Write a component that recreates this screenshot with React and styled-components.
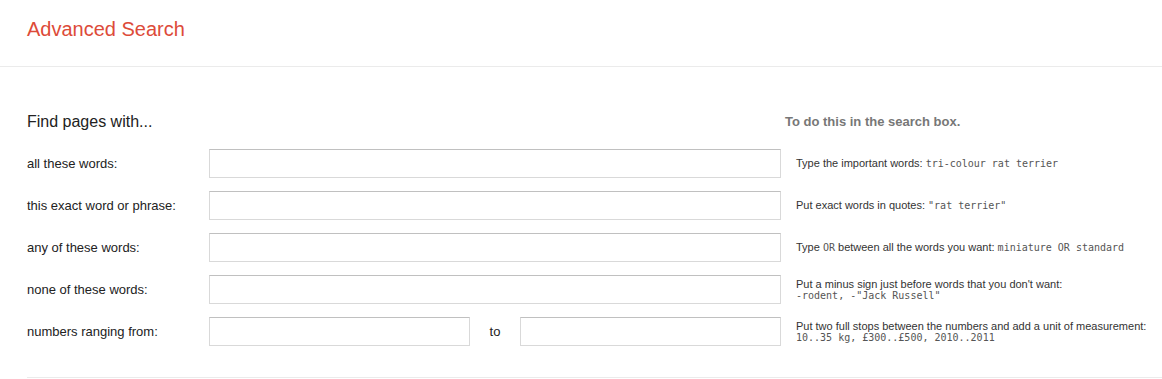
import React from 'react';
import styled, { createGlobalStyle } from 'styled-components';

const GlobalStyle = createGlobalStyle`
  html, body {
    margin: 0;
    padding: 0;
    background: #fff;
    font-family: "Liberation Sans", Arial, sans-serif;
  }
`;

const Page = styled.div`
  width: 1162px;
  height: 379px;
  overflow: hidden;
  background: #fff;
`;

const Header = styled.header`
  height: 67px;
  box-sizing: border-box;
  padding: 19px 0 0 27px;
  border-bottom: 1px solid #ebebeb;
`;

const Title = styled.h1`
  margin: 0;
  font-size: 20px;
  line-height: 20px;
  font-weight: normal;
  color: #dd4b39;
`;

const Main = styled.main`
  padding: 47px 0 0 27px;
`;

const Form = styled.div`
  display: grid;
  grid-template-columns: 182px 572px 1fr;
  row-gap: 13px;
  padding-bottom: 31px;
  border-bottom: 1px solid #ebebeb;
`;

const SectionTitle = styled.h3`
  grid-column: 1 / 3;
  margin: 0 0 6px;
  font-size: 16px;
  line-height: 16px;
  font-weight: normal;
  color: #222;
`;

const HintTitle = styled.h3`
  margin: 0 0 6px;
  padding-left: 4px;
  font-size: 13px;
  line-height: 16px;
  font-weight: bold;
  color: #777;
`;

const Label = styled.label`
  display: flex;
  align-items: center;
  height: 29px;
  font-size: 13px;
  color: #222;
`;

const Field = styled.div`
  display: flex;
  align-items: center;
  height: 29px;
`;

const Input = styled.input`
  box-sizing: border-box;
  height: 29px;
  width: ${p => (p.$half ? '261px' : '100%')};
  margin: 0;
  padding: 0 8px;
  border: 1px solid #d9d9d9;
  border-top-color: #c0c0c0;
  border-radius: 0;
  background: #fff;
  font-size: 13px;
  outline: none;
`;

const To = styled.span`
  flex: 1;
  text-align: center;
  font-size: 13px;
  color: #222;
`;

const Hint = styled.div`
  display: flex;
  flex-direction: column;
  justify-content: center;
  height: 29px;
  padding-left: 15px;
  font-size: 11px;
  line-height: 12px;
  color: #333;
`;

const Code = styled.span`
  font-family: "DejaVu Sans Mono", "Liberation Mono", monospace;
  font-size: 10px;
  color: #555;
`;

const rows = [
  {
    label: 'all these words:',
    hint: <span>Type the important words: <Code>tri-colour rat terrier</Code></span>,
  },
  {
    label: 'this exact word or phrase:',
    hint: <span>Put exact words in quotes: <Code>"rat terrier"</Code></span>,
  },
  {
    label: 'any of these words:',
    hint: (
      <span>
        Type <Code>OR</Code> between all the words you want: <Code>miniature OR standard</Code>
      </span>
    ),
  },
  {
    label: 'none of these words:',
    hint: (
      <>
        <span>Put a minus sign just before words that you don't want:</span>
        <Code>-rodent, -"Jack Russell"</Code>
      </>
    ),
  },
];

export default function App() {
  return (
    <Page>
      <GlobalStyle />
      <Header>
        <Title>Advanced Search</Title>
      </Header>
      <Main>
        <Form>
          <SectionTitle>Find pages with...</SectionTitle>
          <HintTitle>To do this in the search box.</HintTitle>

          {rows.map(r => (
            <React.Fragment key={r.label}>
              <Label>{r.label}</Label>
              <Field>
                <Input type="text" />
              </Field>
              <Hint>{r.hint}</Hint>
            </React.Fragment>
          ))}

          <Label>numbers ranging from:</Label>
          <Field>
            <Input type="text" $half />
            <To>to</To>
            <Input type="text" $half />
          </Field>
          <Hint>
            <span>Put two full stops between the numbers and add a unit of measurement:</span>
            <Code>10..35 kg, £300..£500, 2010..2011</Code>
          </Hint>
        </Form>
      </Main>
    </Page>
  );
}
